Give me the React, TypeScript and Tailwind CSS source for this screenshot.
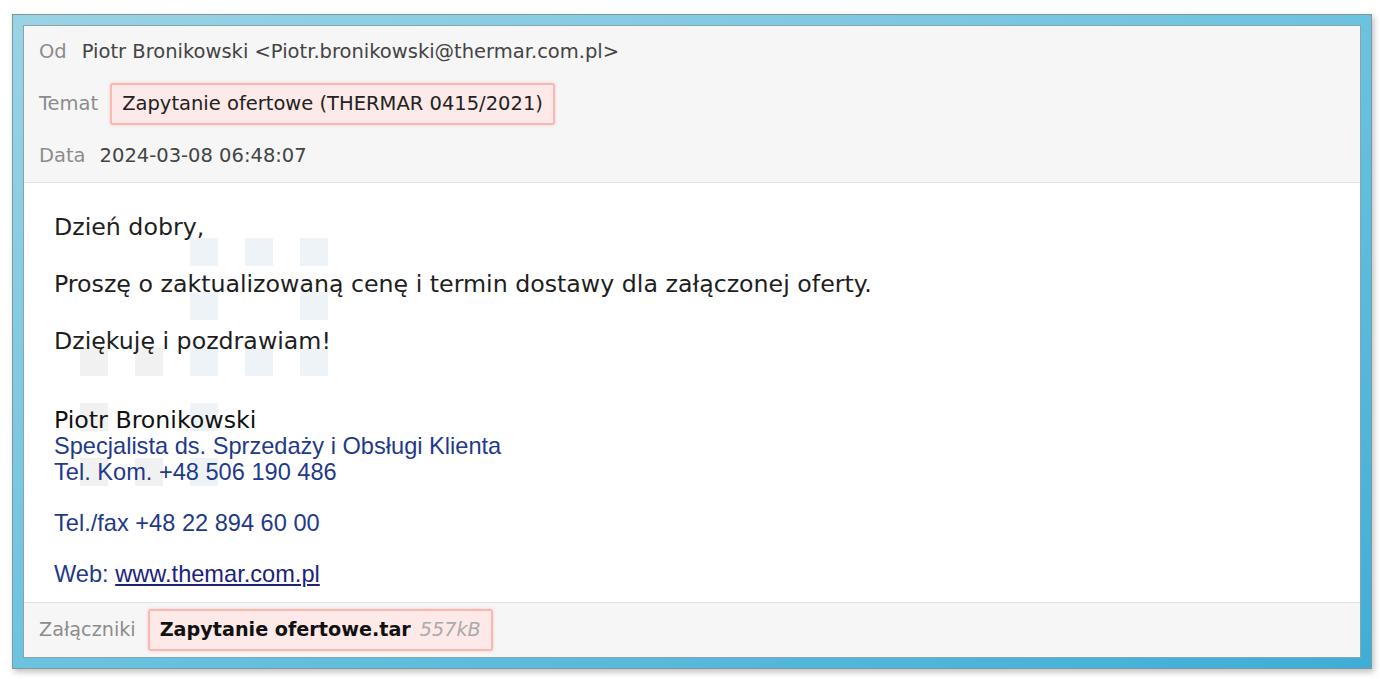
import React from "react";

const squares: { x: number; y: number; c: string }[] = [
  { x: 190, y: 238, c: "bg-[#eef3f8]" },
  { x: 245, y: 238, c: "bg-[#eef3f8]" },
  { x: 300, y: 238, c: "bg-[#eef3f8]" },
  { x: 190, y: 292, c: "bg-[#eef3f8]" },
  { x: 300, y: 292, c: "bg-[#eef3f8]" },
  { x: 80, y: 348, c: "bg-[#f1f1f1]" },
  { x: 135, y: 348, c: "bg-[#f1f1f1]" },
  { x: 190, y: 348, c: "bg-[#eef3f8]" },
  { x: 245, y: 348, c: "bg-[#eef3f8]" },
  { x: 300, y: 348, c: "bg-[#eef3f8]" },
  { x: 80, y: 403, c: "bg-[#f1f1f1]" },
  { x: 190, y: 403, c: "bg-[#eef3f8]" },
  { x: 80, y: 458, c: "bg-[#f1f1f1]" },
  { x: 135, y: 458, c: "bg-[#f1f1f1]" },
  { x: 190, y: 458, c: "bg-[#eef3f8]" },
];

export default function App() {
  return (
    <div className="w-[1380px] h-[679px] bg-white overflow-hidden pt-[14px] pl-[12px]">
      <div className="w-[1360px] h-[655px] border border-[#7f98a0] bg-gradient-to-br from-[#9ad3e4] via-[#6cc3df] to-[#3eaed6] p-[10px] shadow-[2px_3px_6px_rgba(0,0,0,0.25)]">
        <div
          className="relative w-full h-full border border-[#8aa4ad] bg-white flex flex-col"
          style={{ fontFamily: '"DejaVu Sans", Verdana, sans-serif' }}
        >
          {/* header */}
          <div className="bg-[#f6f6f6] border-b border-[#e0e0e0] pl-[15px] text-[19.5px]">
            <div className="h-[52px] flex items-center">
              <span className="text-[#8c8c8c]">Od</span>
              <span className="ml-[15px] text-[#444]">
                Piotr Bronikowski &lt;Piotr.bronikowski@thermar.com.pl&gt;
              </span>
            </div>
            <div className="h-[52px] flex items-center">
              <span className="text-[#8c8c8c]">Temat</span>
              <span className="ml-[12px] h-[42px] flex items-center px-[10px] bg-[#fde9e7] border-2 border-[#f7b9b2] rounded-[3px] text-[#222] shadow-[0_0_3px_rgba(240,150,140,0.5)]">
                Zapytanie ofertowe (THERMAR 0415/2021)
              </span>
            </div>
            <div className="h-[52px] flex items-center">
              <span className="text-[#8c8c8c]">Data</span>
              <span className="ml-[14px] text-[#444]">2024-03-08 06:48:07</span>
            </div>
          </div>

          {/* body */}
          <div className="relative flex-1 pl-[30px] pt-[30px] text-[23.7px] text-[#1e1e1e]">
            {squares.map((s, i) => (
              <div
                key={i}
                className={`absolute w-[28px] h-[28px] ${s.c}`}
                style={{ left: s.x - 24, top: s.y - 183 }}
              />
            ))}
            <div className="relative">
              <p className="leading-[28px] mb-[29px]">Dzień dobry,</p>
              <p className="leading-[28px] mb-[29px]">
                Proszę o zaktualizowaną cenę i termin dostawy dla załączonej oferty.
              </p>
              <p className="leading-[28px]">Dziękuję i pozdrawiam!</p>
              <div className="mt-[52px] leading-[26px]">
                <div className="text-[#111]">Piotr Bronikowski</div>
                <div
                  className="text-[#1f3a8a] text-[23.6px]"
                  style={{ fontFamily: '"Liberation Sans", Arial, sans-serif' }}
                >
                  <div className="leading-[26px]">Specjalista ds. Sprzedaży i Obsługi Klienta</div>
                  <div className="leading-[26px]">Tel. Kom. +48 506 190 486</div>
                  <div className="leading-[25px]">&nbsp;</div>
                  <div className="leading-[26px]">Tel./fax +48 22 894 60 00</div>
                  <div className="leading-[25px]">&nbsp;</div>
                  <div className="leading-[26px]">
                    Web: <span className="underline text-[#1a237e]">www.themar.com.pl</span>
                  </div>
                </div>
              </div>
            </div>
          </div>

          {/* footer */}
          <div className="h-[55px] bg-[#f6f6f6] border-t border-[#e0e0e0] pl-[15px] flex items-center text-[19.2px]">
            <span className="text-[#8c8c8c]">Załączniki</span>
            <span className="ml-[12px] h-[42px] flex items-center px-[10px] bg-[#fde9e7] border-2 border-[#f7b9b2] rounded-[3px] shadow-[0_0_3px_rgba(240,150,140,0.5)]">
              <span className="font-bold text-[#111]">Zapytanie ofertowe.tar</span>
              <span className="ml-[9px] italic text-[#aaa]">557kB</span>
            </span>
          </div>
        </div>
      </div>
    </div>
  );
}
